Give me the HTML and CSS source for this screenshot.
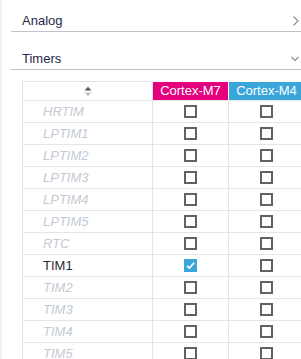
FILE: index.html
```html
<!DOCTYPE html>
<html>
<head>
<meta charset="utf-8">
<link rel="stylesheet" href="styles.css">
</head>
<body>
<div class="panel">
	<div class="section first">
		<span>Analog</span>
		<svg class="chevron" width="8" height="12" viewBox="0 0 8 12"><path d="M1.5 1.5 L6 6 L1.5 10.5" fill="none" stroke="#8a8a8a" stroke-width="1.1"/></svg>
	</div>
	<div class="section">
		<span>Timers</span>
		<svg class="chevron" width="10" height="8" viewBox="0 0 10 8"><path d="M1.5 2 L5 5.5 L8.5 2" fill="none" stroke="#8a8a8a" stroke-width="1.1"/></svg>
	</div>
	<table class="modes">
		<colgroup>
			<col class="c-name">
			<col class="c-core">
			<col class="c-core">
		</colgroup>
		<thead>
			<tr>
				<th class="sort">
					<svg width="8" height="11" viewBox="0 0 8 11"><path d="M0.5 4.5 L4 0.8 L7.5 4.5 Z" fill="#5a5a5a"/><path d="M0.5 6.5 L4 10.2 L7.5 6.5 Z" fill="#c4c4c4"/></svg>
				</th>
				<th class="core m7">Cortex-M7</th>
				<th class="core m4">Cortex-M4</th>
			</tr>
		</thead>
		<tbody>
			<tr><td class="name off">HRTIM</td><td><span class="box"></span></td><td><span class="box"></span></td></tr>
			<tr><td class="name off">LPTIM1</td><td><span class="box"></span></td><td><span class="box"></span></td></tr>
			<tr><td class="name off">LPTIM2</td><td><span class="box"></span></td><td><span class="box"></span></td></tr>
			<tr><td class="name off">LPTIM3</td><td><span class="box"></span></td><td><span class="box"></span></td></tr>
			<tr><td class="name off">LPTIM4</td><td><span class="box"></span></td><td><span class="box"></span></td></tr>
			<tr><td class="name off">LPTIM5</td><td><span class="box"></span></td><td><span class="box"></span></td></tr>
			<tr><td class="name off">RTC</td><td><span class="box"></span></td><td><span class="box"></span></td></tr>
			<tr><td class="name">TIM1</td><td><span class="box checked"><svg width="13" height="13" viewBox="0 0 13 13"><path d="M3 6.8 L5.4 9.1 L10.2 3.8" fill="none" stroke="#fff" stroke-width="1.7"/></svg></span></td><td><span class="box"></span></td></tr>
			<tr><td class="name off">TIM2</td><td><span class="box"></span></td><td><span class="box"></span></td></tr>
			<tr><td class="name off">TIM3</td><td><span class="box"></span></td><td><span class="box"></span></td></tr>
			<tr><td class="name off">TIM4</td><td><span class="box"></span></td><td><span class="box"></span></td></tr>
			<tr><td class="name off">TIM5</td><td><span class="box"></span></td><td><span class="box"></span></td></tr>
		</tbody>
	</table>
</div>
</body>
</html>
```

FILE: styles.css
```css
html, body {
	margin: 0;
	padding: 0;
}
body {
	width: 301px;
	height: 359px;
	overflow: hidden;
	background: #fff;
	font: 13px/15px "Liberation Sans", Arial, sans-serif;
	border-left: 2px solid #f1f1f1;
	box-sizing: border-box;
}
.panel {
	width: 340px;
}
.section {
	display: flex;
	align-items: center;
	justify-content: space-between;
	width: 290px;
	margin-left: 9px;
	padding: 19px 0 3px 11px;
	box-sizing: border-box;
	border-bottom: 1px solid #bcc3cd;
	color: #1f2a48;
}
.section.first {
	padding-top: 13px;
}
.section .chevron {
	margin-right: 1px;
}
.modes {
	margin: 11px 0 0 20px;
	border-collapse: separate;
	border-spacing: 0;
	table-layout: fixed;
	width: 283px;
}
.modes .c-name {
	width: 131px;
}
.modes .c-core {
	width: 76px;
}
.modes th, .modes td {
	padding: 0;
	border-right: 1px solid #e3e5e8;
	border-bottom: 1px solid #e3e5e8;
	text-align: center;
	font-weight: normal;
}
.modes th {
	height: 18px;
	border-top: 1px solid #e3e5e8;
}
.modes th.sort {
	border-left: 1px solid #e3e5e8;
	line-height: 0;
}
.modes th.core {
	color: #fff;
	border-top-color: #fff;
	border-right-color: #fff;
	line-height: 18px;
	white-space: nowrap;
}
.modes th.m7 {
	background: #e5007d;
}
.modes th.m4 {
	background: #3aa7da;
}
.modes td {
	height: 21px;
	line-height: 0;
}
.modes td.name {
	border-left: 1px solid #e3e5e8;
	text-align: left;
	padding-left: 20px;
	line-height: 15px;
	color: #2a2a38;
}
.modes td.name.off {
	color: #c3cad3;
	font-style: italic;
}
.box {
	display: inline-block;
	width: 13px;
	height: 13px;
	box-sizing: border-box;
	border: 2px solid #626262;
	vertical-align: middle;
}
.box.checked {
	border: none;
	background: #3aa6dc;
}
.box svg {
	display: block;
}
```
